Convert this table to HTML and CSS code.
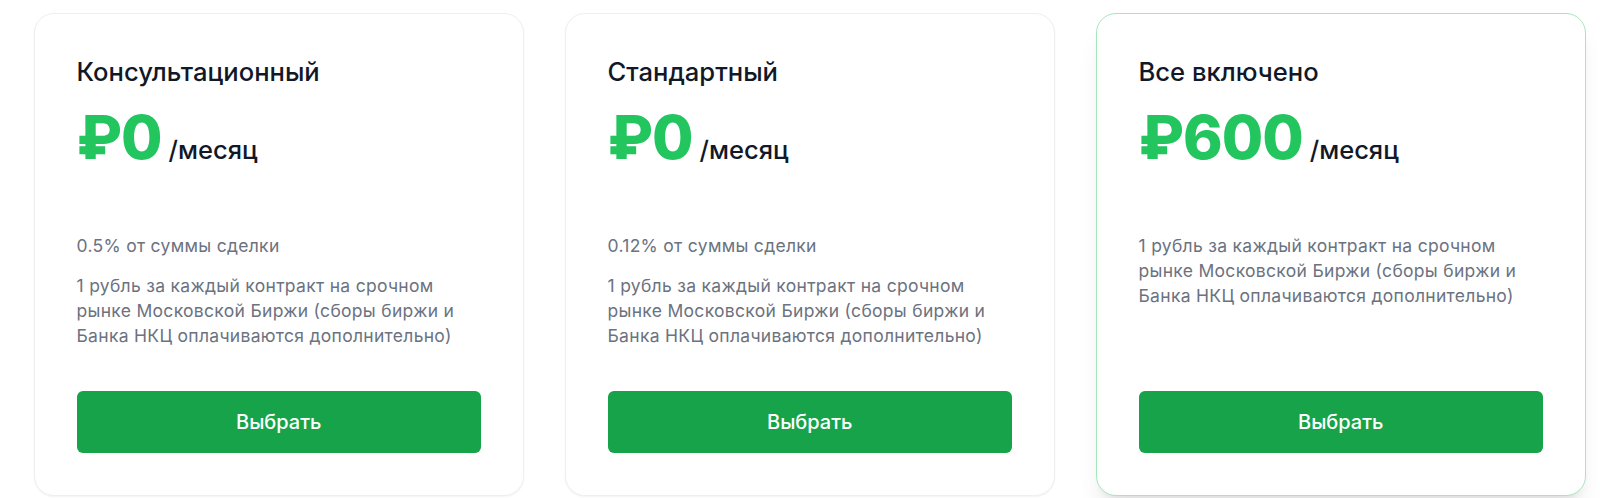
FILE: index.html
```html
<!DOCTYPE html>
<html lang="ru">
<head>
<meta charset="utf-8">
<title>Тарифы</title>
<link rel="stylesheet" href="styles.css">
</head>
<body>
<main class="plans">
  <section class="card">
    <h3 class="card-title">Консультационный</h3>
    <div class="price"><span class="amount">₽0</span><span class="period">/месяц</span></div>
    <ul class="features">
      <li>0.5% от суммы сделки</li>
      <li>1 рубль за каждый контракт на срочном рынке Московской Биржи (сборы биржи и Банка НКЦ оплачиваются дополнительно)</li>
    </ul>
    <button class="choose">Выбрать</button>
  </section>
  <section class="card">
    <h3 class="card-title">Стандартный</h3>
    <div class="price"><span class="amount">₽0</span><span class="period">/месяц</span></div>
    <ul class="features">
      <li>0.12% от суммы сделки</li>
      <li>1 рубль за каждый контракт на срочном рынке Московской Биржи (сборы биржи и Банка НКЦ оплачиваются дополнительно)</li>
    </ul>
    <button class="choose">Выбрать</button>
  </section>
  <section class="card card-featured">
    <h3 class="card-title">Все включено</h3>
    <div class="price"><span class="amount">₽600</span><span class="period">/месяц</span></div>
    <ul class="features">
      <li>1 рубль за каждый контракт на срочном рынке Московской Биржи (сборы биржи и Банка НКЦ оплачиваются дополнительно)</li>
    </ul>
    <button class="choose">Выбрать</button>
  </section>
</main>
</body>
</html>
```
FILE: styles.css
```css
* { box-sizing: border-box; }
html, body { margin: 0; padding: 0; background: #ffffff; }
body {
  font-family: Inter, "Noto Sans", "Liberation Sans", sans-serif;
  color: #111827;
  width: 1600px;
  height: 498px;
  overflow: hidden;
}
.plans {
  display: grid;
  grid-template-columns: repeat(3, 489.5px);
  column-gap: 41.5px;
  padding: 13px 0 0 34px;
}
.card {
  display: flex;
  flex-direction: column;
  height: 483px;
  padding: 42px 41.5px 42px 41.5px;
  background: #fff;
  border: 1px solid #eeeff1;
  border-radius: 20px;
  box-shadow: 0 1px 2px rgba(0,0,0,0.05);
}
.card-featured {
  border-color: #a6e6be;
  box-shadow: 0 20px 25px -5px rgba(0,0,0,0.08), 0 8px 10px -6px rgba(0,0,0,0.08);
}
.card-title {
  margin: 0;
  font-size: 25.6px;
  line-height: 32px;
  font-weight: 500;
  color: #111827;
}
.price {
  display: flex;
  align-items: baseline;
  margin-top: 19px;
}
.amount {
  font-size: 60px;
  line-height: 60px;
  font-weight: 800;
  color: #22c55e;
  letter-spacing: -1px;
}
.period {
  margin-left: 7px;
  font-size: 25.5px;
  font-weight: 500;
  color: #111827;
}
.features {
  list-style: none;
  margin: 66px 0 0 0;
  padding: 0;
  font-size: 17.5px;
  line-height: 25px;
  letter-spacing: 0.3px;
  color: #6b7280;
}
.features li + li { margin-top: 15px; }
.choose {
  margin-top: auto;
  height: 62px;
  width: 100%;
  border: none;
  border-radius: 6px;
  background: #16a34a;
  color: #fff;
  font-family: inherit;
  font-size: 20px;
  font-weight: 500;
}
```
